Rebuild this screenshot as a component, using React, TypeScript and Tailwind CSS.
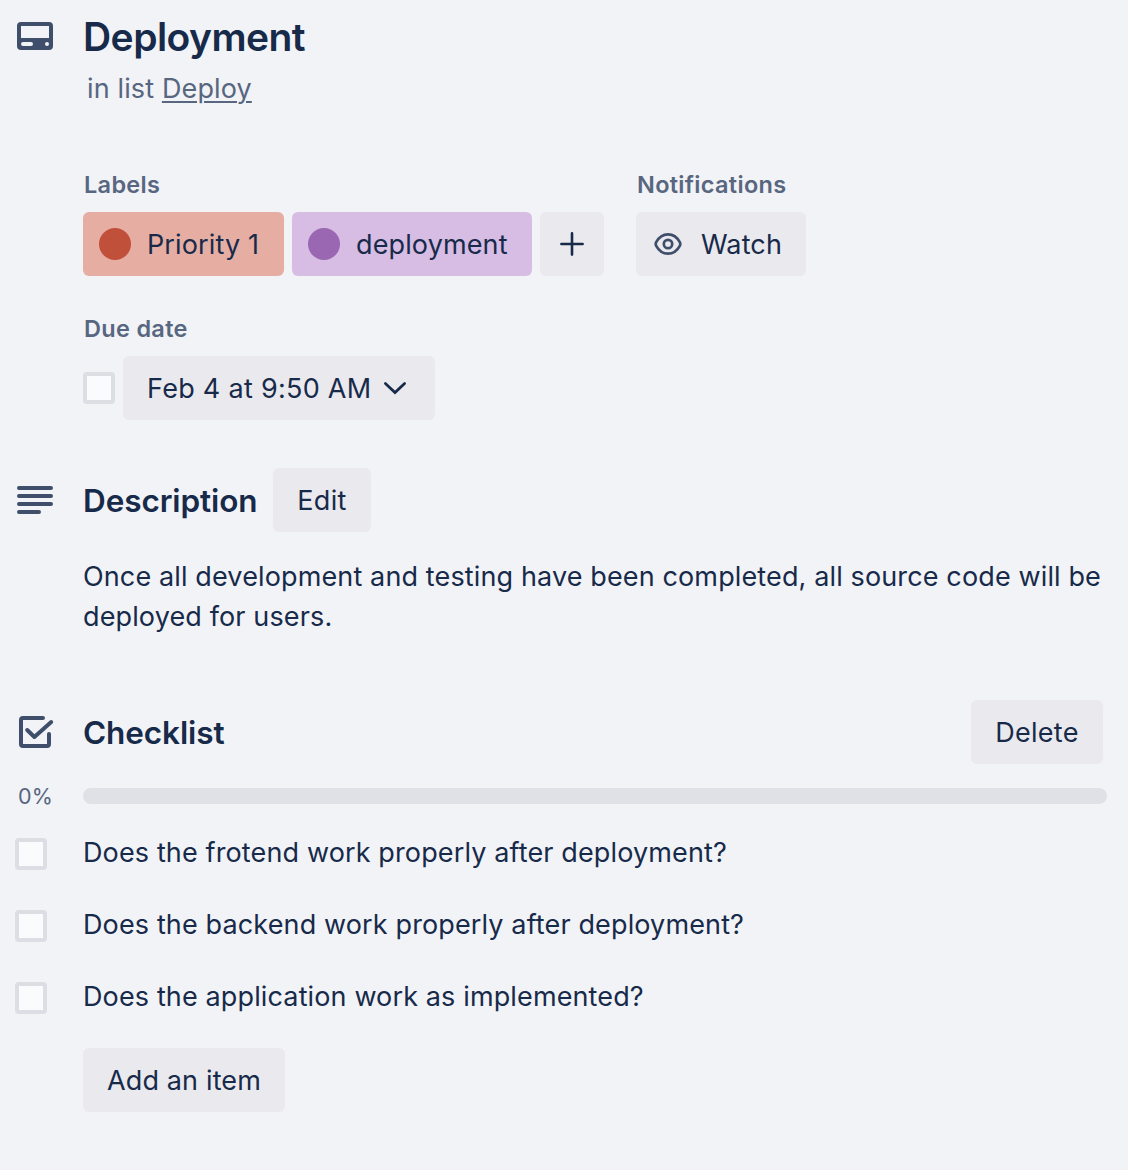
import React from 'react';

const buttonBase =
  'flex h-16 shrink-0 items-center whitespace-nowrap rounded-[6px] bg-[#e9e9ee] pt-[2px] text-[27px] text-[#182a4a]';

const fieldLabel = 'h-10 pl-px text-[23.5px] font-semibold leading-[26px] tracking-[0.3px] text-[#58667f]';

function CardIcon() {
  return (
    <svg width="36" height="28" viewBox="0 0 36 28" className="block">
      <path
        fill="#3f4e6a"
        fillRule="evenodd"
        d="M4 0H32A4 4 0 0 1 36 4V24A4 4 0 0 1 32 28H4A4 4 0 0 1 0 24V4A4 4 0 0 1 4 0ZM4 4V16H32V4ZM6 20A2 2 0 0 0 6 24H14A2 2 0 0 0 14 20ZM30 20A2 2 0 0 0 30 24A2 2 0 0 0 30 20Z"
      />
    </svg>
  );
}

function DescriptionIcon() {
  return (
    <svg width="36" height="28" viewBox="0 0 36 28" className="block" stroke="#3f4e6a" strokeWidth="4" strokeLinecap="round">
      <path d="M2 2H34M2 10H34M2 18H34M2 26H22" />
    </svg>
  );
}

function ChecklistIcon() {
  return (
    <svg width="36" height="32" viewBox="0 0 36 32" className="block" fill="none" stroke="#3f4e6a" strokeWidth="4" strokeLinecap="round" strokeLinejoin="round">
      <path d="M24 2H4A2 2 0 0 0 2 4V28A2 2 0 0 0 4 30H28A2 2 0 0 0 30 28V18" />
      <path d="M8.2 14L15.4 21L32.2 6" />
    </svg>
  );
}

function EyeIcon() {
  return (
    <svg width="28" height="24" viewBox="0 0 28 24" className="block" fill="none" stroke="#3f4e6a" strokeWidth="2.7">
      <path d="M14 2.4C8.2 2.4 4.6 5.8 2.2 10.2Q1.2 12 2.2 13.8C4.6 18.2 8.2 21.6 14 21.6S23.4 18.2 25.8 13.8Q26.8 12 25.8 10.2C23.4 5.8 19.8 2.4 14 2.4Z" />
      <circle cx="14" cy="12" r="4.2" />
    </svg>
  );
}

function Checkbox() {
  return <div className="h-8 w-8 shrink-0 rounded-[4px] border-4 border-[#dcdee3] bg-[#fafbfc]" />;
}

const items = [
  'Does the frotend work properly after deployment?',
  'Does the backend work properly after deployment?',
  'Does the application work as implemented?',
];

export default function App() {
  return (
    <div className="h-[1170px] w-[1128px] overflow-hidden bg-[#f1f3f7] pl-[15px] font-['Inter',sans-serif] text-[27px] tracking-[0.13px] text-[#182a4a]">
      <header className="flex h-[172px]">
        <div className="w-[68px] shrink-0 pl-[2px] pt-[22px]">
          <CardIcon />
        </div>
        <div className="pt-[13px]">
          <h1 className="text-[39px] font-semibold leading-[48px] tracking-[-0.55px]">Deployment</h1>
          <p className="pl-1 pt-2 leading-10 text-[#58667f]">
            in list <span className="underline decoration-2 underline-offset-[3px]">Deploy</span>
          </p>
        </div>
      </header>

      <section className="flex h-[144px] gap-8 pl-[68px]">
        <div>
          <h3 className={fieldLabel}>Labels</h3>
          <div className="flex gap-2">
            <div className="flex h-16 w-[201px] items-center gap-4 whitespace-nowrap rounded-[6px] bg-[#e6aea3] pl-4">
              <span className="h-8 w-8 rounded-full bg-[#c1503a]" />
              <span className="pt-[2px]">Priority 1</span>
            </div>
            <div className="flex h-16 w-60 items-center gap-4 whitespace-nowrap rounded-[6px] bg-[#d7bce4] pl-4">
              <span className="h-8 w-8 rounded-full bg-[#9a67b3]" />
              <span className="pt-[2px]">deployment</span>
            </div>
            <div className="flex h-16 w-16 items-center justify-center rounded-[6px] bg-[#e9e9ee]">
              <svg width="24" height="24" viewBox="0 0 24 24" stroke="#182a4a" strokeWidth="2.6" strokeLinecap="round">
                <path d="M12 1.4V22.6M1.4 12H22.6" />
              </svg>
            </div>
          </div>
        </div>
        <div>
          <h3 className={fieldLabel}>Notifications</h3>
          <div className="flex h-16 w-[170px] items-center gap-[18px] rounded-[6px] bg-[#e9e9ee] pl-[18px]">
            <EyeIcon />
            <span className="pl-px pt-[2px]">Watch</span>
          </div>
        </div>
      </section>

      <section className="h-[152px] pl-[68px]">
        <h3 className={fieldLabel}>Due date</h3>
        <div className="flex items-center gap-2">
          <Checkbox />
          <div className="flex h-16 w-[312px] items-center justify-between whitespace-nowrap rounded-[6px] bg-[#e9e9ee] pl-6 pr-7">
            <span className="pt-[2px] tracking-[0.28px]">Feb 4 at 9:50 AM</span>
            <svg width="24" height="16" viewBox="0 0 24 16" fill="none" stroke="#182a4a" strokeWidth="2.7" strokeLinecap="round">
              <path d="M2.4 3.5L12 12.6L21.6 3.5" />
            </svg>
          </div>
        </div>
      </section>

      <section className="h-[232px]">
        <div className="flex items-center">
          <div className="w-[68px] pl-[2px]">
            <DescriptionIcon />
          </div>
          <h2 className="w-[190px] pt-[2px] text-[31.5px] font-semibold tracking-[-0.1px]">Description</h2>
          <div className={`${buttonBase} w-[98px] justify-center tracking-[0.3px]`}>Edit</div>
        </div>
        <p className="whitespace-nowrap pl-[68px] pt-[25px] leading-10">
          Once all development and testing have been completed, all source code will be
          <br />
          deployed for users.
        </p>
      </section>

      <section>
        <div className="flex items-center">
          <div className="w-[68px] pl-1">
            <ChecklistIcon />
          </div>
          <h2 className="w-[888px] pt-[2px] text-[31.5px] font-semibold tracking-[-0.1px]">Checklist</h2>
          <div className={`${buttonBase} w-[132px] justify-center tracking-[0.25px]`}>Delete</div>
        </div>
        <div className="flex h-[74px] items-start pt-6">
          <div className="w-[68px] pl-[3px] text-[21.5px] leading-4 text-[#58667f]">0%</div>
          <div className="h-4 w-[1024px] rounded-full bg-[#e0e1e6]" />
        </div>
        <ul>
          {items.map((item) => (
            <li key={item} className="flex h-[72px]">
              <Checkbox />
              <span className="-mt-[5px] pl-9 leading-10">{item}</span>
            </li>
          ))}
        </ul>
        <div className="-mt-[6px] flex pl-[68px]">
          <div className={`${buttonBase} w-[202px] justify-center tracking-[0.15px]`}>Add an item</div>
        </div>
      </section>
    </div>
  );
}
